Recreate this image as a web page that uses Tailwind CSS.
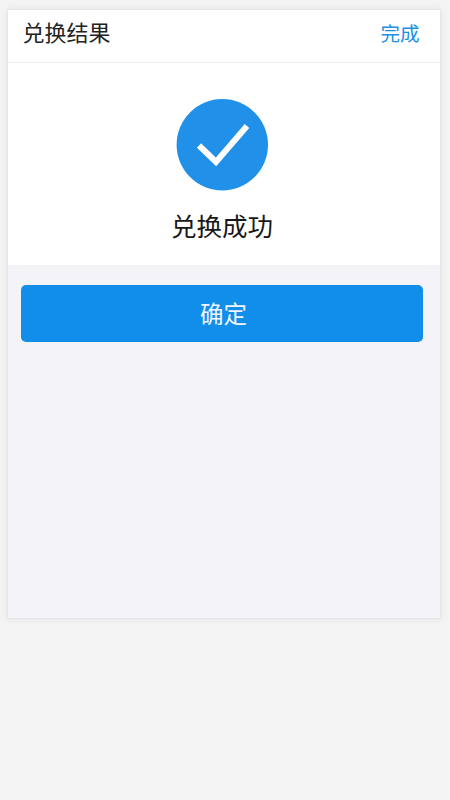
<!DOCTYPE html>
<html lang="zh-CN"><head><meta charset="utf-8"><title>兑换结果</title>
<script src="https://cdn.jsdelivr.net/npm/@tailwindcss/browser@4"></script></head>
<body class="h-[800px] overflow-hidden bg-[#f4f4f4] pt-[9px] pl-[7px] font-['Noto_Sans_CJK_SC',sans-serif]">
<main class="h-[610px] w-[434px] border border-[#e6e6e8] bg-[#f3f3f8] shadow-[0_0_8px_rgba(0,0,0,0.07)]">
<header class="flex h-[53px] items-start justify-between border-b border-[#eeeeee] bg-white pt-[5px] pr-[20.5px] pl-[14.5px]">
<h1 class="text-[22px] leading-[32px] text-[#222222]">兑换结果</h1>
<button class="pt-[3px] text-[19.5px] leading-[30px] text-[#218fe2]">完成</button>
</header>
<section class="flex h-[202px] flex-col items-center bg-white pt-[36px] pr-[4px]">
<svg class="size-[92px] shrink-0" viewBox="0 0 92 92" fill="none"><circle cx="46.3" cy="45.8" r="45.7" fill="#2190e8"/><path d="M23 46.5L40 63L71 27" stroke="white" stroke-width="6"/></svg>
<p class="mt-[15px] text-[25.5px] leading-[38px] text-[#181818]">兑换成功</p>
</section>
<div class="pt-[20px] pr-[17px] pl-[13px]"><button class="h-[57px] w-full rounded-[5px] bg-[#108ee9] pb-[2px] pl-[3px] text-[23.5px] leading-[36px] text-[#f0f5ff]">确定</button></div>
</main></body></html>
